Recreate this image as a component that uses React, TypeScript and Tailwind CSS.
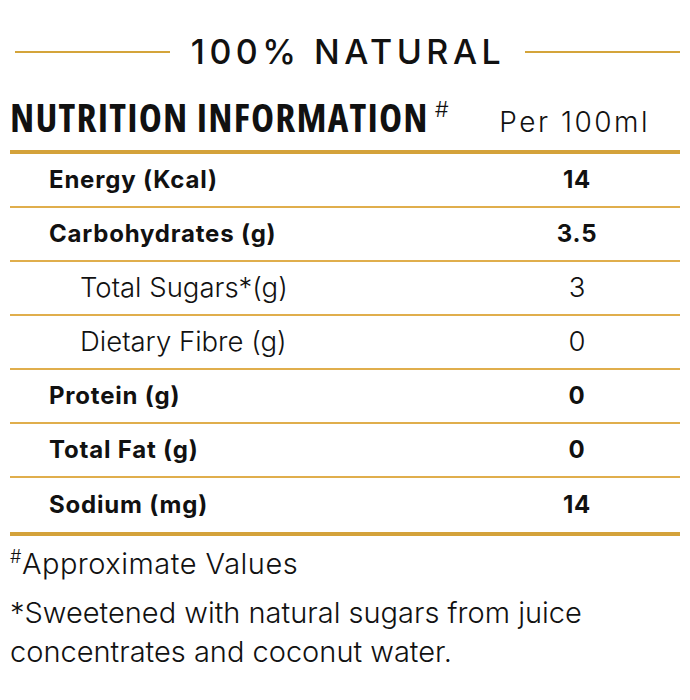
const rows = [
  { label: 'Energy (Kcal)', value: '14', bold: true },
  { label: 'Carbohydrates (g)', value: '3.5', bold: true },
  { label: 'Total Sugars*(g)', value: '3', bold: false },
  { label: 'Dietary Fibre (g)', value: '0', bold: false },
  { label: 'Protein (g)', value: '0', bold: true },
  { label: 'Total Fat (g)', value: '0', bold: true },
  { label: 'Sodium (mg)', value: '14', bold: true },
];

export default function App() {
  return (
    <div className="w-[690px] bg-white text-[#111] font-['Inter',sans-serif]">
      {/* title */}
      <div className="flex items-center pt-[28px] pl-[15px] pr-[10px] h-[76px]">
        <div className="flex-1 h-[2px] bg-[#d4a43a]" />
        <h1 className="ml-[21px] mr-[20px] text-[34px] font-medium tracking-[4.5px] leading-none whitespace-nowrap">
          100% NATURAL
        </h1>
        <div className="flex-1 h-[2px] bg-[#d4a43a]" />
      </div>

      {/* heading */}
      <div className="flex items-end h-[74px] pl-[10px] pb-[14px] whitespace-nowrap">
        <h2 className="shrink-0 font-['Open_Sans',sans-serif] text-[39px] font-bold leading-none tracking-[1.2px] [font-stretch:75%]">
          NUTRITION INFORMATION
        </h2>
        <sup className="shrink-0 text-[22px] font-light ml-[6px] -translate-y-[16px]">#</sup>
        <span className="shrink-0 ml-auto mr-[40px] text-[28px] font-light leading-none tracking-[2.5px]">
          Per 100ml
        </span>
      </div>

      {/* table */}
      <div className="mx-[10px] border-t-4 border-b-4 border-[#d4a23a]">
        {rows.map((r, i) => (
          <div
            key={r.label}
            className={
              'flex items-center h-[54px] leading-none whitespace-nowrap ' +
              (i < rows.length - 1 ? 'border-b-2 border-[#e0ae4c]' : '') +
              (r.bold ? ' text-[24px] font-bold tracking-[0.8px]' : ' text-[27.5px] font-light')
            }
          >
            <span className={r.bold ? 'pl-[39px]' : 'pl-[70px]'}>{r.label}</span>
            <span className="ml-auto mr-[43px] w-[120px] text-center">{r.value}</span>
          </div>
        ))}
      </div>

      {/* notes */}
      <div className="px-[10px] pt-[8px] text-[29px] font-light leading-[39px]">
        <p className="tracking-[0.5px]">
          <sup className="text-[18px] -top-[0.6em]">#</sup>Approximate Values
        </p>
        <p className="mt-[10px]">
          *Sweetened with natural sugars from juice
          <br />
          concentrates and coconut water.
        </p>
      </div>
    </div>
  );
}
